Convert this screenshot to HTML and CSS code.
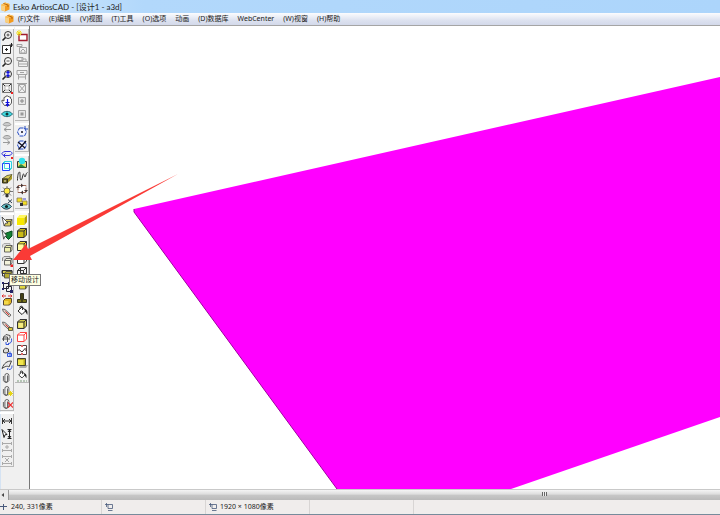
FILE: index.html
```html
<!DOCTYPE html>
<html lang="zh-CN">
<head>
  <meta charset="UTF-8" />
  <meta name="viewport" content="width=device-width, initial-scale=1" />
  <title>Esko ArtiosCAD - [设计1 - a3d]</title>
  <link rel="stylesheet" href="styles.css">
</head>
<body>
  <!-- shared symbols -->
  <svg class="sprite" aria-hidden="true">
    <symbol id="app" viewBox="0 0 10 10">
      <path d="M1 3 5 .5 9.500 2v5.500L5 9.500 1 8z" fill="#f39a1e"/>
      <path d="M1 3 5 4v5.500L1 8z" fill="#f7cf82"/>
      <path d="M1 3 5 .5 9.500 2 5 4z" fill="#ffc45c"/>
      <path d="M3.500 1.500 8 3v2" fill="none" stroke="#b9680c"/>
    </symbol>
    <symbol id="lens" viewBox="0 0 12 12">
      <circle cx="7" cy="5" r="3.500" fill="#f6f6f6" stroke="#333"/>
      <path d="M4.500 7.500 1.500 10.500" stroke="#222" stroke-width="1.600"/>
    </symbol>
    <symbol id="cube" viewBox="0 0 12 12">
      <path d="M1.500 4 4 1.500h6.500V8L8 10.500H1.500z" fill="currentColor"/>
      <path d="M1.500 4 4 1.500h6.500V8L8 10.500H1.500zM1.500 4H8v6.500M8 4l2.500-2.500" fill="none" stroke="#333"/>
    </symbol>
    <symbol id="wire" viewBox="0 0 12 12">
      <path d="M1.500 4.500h6v6h-6zM4.500 1.500h6v6h-6zM1.500 4.500l3-3M7.500 4.500l3-3M7.500 10.500l3-3M1.500 10.500l3-3" fill="none" stroke="currentColor"/>
    </symbol>
    <symbol id="minibox" viewBox="0 0 12 12">
      <path d="M3.500 5.500 5 3.500h6V8l-1.500 2h-6z" fill="currentColor"/>
      <path d="M3.500 5.500 5 3.500h6V8l-1.500 2h-6zM3.500 5.500h6V10M9.500 5.500l1.500-2" fill="none" stroke="#444" stroke-width=".8"/>
    </symbol>
    <symbol id="clip" viewBox="0 0 12 12">
      <path d="M6.500 3.500v5.500a1.300 1.300 0 0 1-2.600 0V3.500a2 2 0 0 1 4 0V8.500a3 3 0 0 1-5.500 0V4" fill="none" stroke="#444" stroke-width=".8"/>
    </symbol>
    <symbol id="pencil" viewBox="0 0 12 12">
      <path d="M1.500 2 4 2.500l6 5.500-1.800 2-6-5.500z" fill="#d8ccc4" stroke="#555" stroke-width=".8"/>
      <path d="m4.500 4.500 3.500 3.500" stroke="#d33"/>
    </symbol>
    <symbol id="bucket" viewBox="0 0 12 12">
      <path d="M2 6 6 2l4 3.500-4 4z" fill="#fff" stroke="#222"/>
      <path d="M4 4V2.500a1.300 1.300 0 0 1 2.600 0V5" fill="none" stroke="#222"/>
      <path d="M8.500 4c2.500.5 3.500 2 2.800 6-1-1.500-1-2.500-2.300-3.500z" fill="#222"/>
    </symbol>
    <symbol id="screen" viewBox="0 0 8 8">
      <path d="M1.500 0v4M0 1.500h3M3 1.500h4.500v4H3zM3 7.500h4.500" fill="none" stroke="#4a5a7c" stroke-width=".8"/>
    </symbol>
  </svg>

  <header class="titlebar">
    <svg class="logo"><use href="#app"/></svg>
    <h1>Esko ArtiosCAD - [设计1 - a3d]</h1>
  </header>

  <nav class="menubar" aria-label="菜单">
    <svg class="logo"><use href="#app"/></svg>
    <button type="button">(F)文件</button>
    <button type="button">(E)编辑</button>
    <button type="button">(V)视图</button>
    <button type="button">(T)工具</button>
    <button type="button">(O)选项</button>
    <button type="button">动画</button>
    <button type="button">(D)数据库</button>
    <button type="button">WebCenter</button>
    <button type="button">(W)视窗</button>
    <button type="button">(H)帮助</button>
  </nav>

  <main class="workspace">
    <div class="palette palette-view">
      <!-- view -->
      <div class="group">
        <button type="button" aria-label="放大"><svg viewBox="0 0 12 12"><use href="#lens"/><path d="M5.500 5h3M7 3.500v3" stroke="#333" stroke-width=".8"/></svg></button>
        <button type="button" aria-label="适合窗口"><svg viewBox="0 0 12 12"><path d="M1.500 2.500h8v8h-8z" fill="#fff" stroke="#333"/><path d="M4 6.500h3M5.500 5v3M10.500 0v4M8.500 2h3.500" stroke="#222"/></svg></button>
        <button type="button" aria-label="缩小"><svg viewBox="0 0 12 12"><use href="#lens"/><path d="M5.500 5h3" stroke="#333" stroke-width=".8"/></svg></button>
        <button type="button" aria-label="动态缩放"><svg viewBox="0 0 12 12"><use href="#lens"/><path d="M7 2v6M5.500 4 7 2.300 8.500 4M5.500 6 7 7.700 8.500 6" fill="none" stroke="#11d" stroke-width="1.200"/></svg></button>
        <button type="button" aria-label="全部显示"><svg viewBox="0 0 12 12"><path d="M1.500 1.500h9v9h-9z" fill="#eee" stroke="#555" stroke-width=".8"/><path d="m2 2 8 8M10 2 2 10" stroke="#333"/><path d="M4 4h4v4H4z" fill="#fff" stroke="#888" stroke-width=".6"/><path d="M10 10h2v2h-2z" fill="#e22"/></svg></button>
        <button type="button" aria-label="平移"><svg viewBox="0 0 12 12"><path d="M3.500 10.500 1 7V5l2 1V2.500l1.500-.5.500-1h2l1 1h1.500v1.500l1 .5v4l-2 2.500z" fill="#fff" stroke="#333" stroke-width=".8"/><path d="M6.500 4v6.500M4.500 7.500h4M5 9l1.500 2L8 9" fill="none" stroke="#11d" stroke-width="1.200"/></svg></button>
        <button type="button" aria-label="视角"><svg viewBox="0 0 12 12"><path d="M.5 6C3 2.500 9 2.500 11.500 6 9 9.500 3 9.500.5 6z" fill="#3fd9df" stroke="#256a78"/><circle cx="6" cy="6" r="1.500" fill="#133"/></svg></button>
        <button type="button" disabled aria-label="上一视图"><svg viewBox="0 0 12 12"><path d="M2 3.500C4 .8 8 .8 10 3.500 8 5.500 4 5.500 2 3.500zM10 8.500H3M5.500 6.500 3 8.500l2.500 2" fill="#ccc" stroke="#999"/></svg></button>
        <button type="button" disabled aria-label="下一视图"><svg viewBox="0 0 12 12"><path d="M2 3.500C4 .8 8 .8 10 3.500 8 5.500 4 5.500 2 3.500zM2 8.500h7M6.500 6.500 9 8.500l-2.500 2" fill="#ccc" stroke="#999"/></svg></button>
        <button type="button" aria-label="旋转视图"><svg viewBox="0 0 12 12"><path d="M3 8.500C0 7.500 0 5.500 4 4.500h5.500c2.500 1.500 2 3-1.500 4H3m1.500-2L2.500 8.500l2 2" fill="none" stroke="#33d"/><path d="M10 10h2v2h-2z" fill="#e22"/></svg></button>
        <button type="button" aria-label="视图面"><svg viewBox="0 0 12 12"><path d="m1.500 3.500 2-2h7v7l-2 2" fill="#dff" stroke="#2ad0e0"/><path d="M1.500 3.500h7v7h-7z" fill="#eff" stroke="#24f"/><path d="M3.500 1.500v7h7" fill="none" stroke="#2cc" stroke-width=".8"/></svg></button>
        <button type="button" aria-label="透视"><svg viewBox="0 0 12 12"><path d="m1 6 5-3.500 5-1V6L7 9.500 1 10z" fill="#a79a22"/><path d="m1 6 5-3.500 5-1L7.500 6z" fill="#d8cc59" stroke="#443" stroke-width=".7"/><path d="M1.500 6h5v4h-5z" fill="#6c6216" stroke="#332"/><path d="M3 7.500h2v1H3z" fill="#eed"/></svg></button>
        <button type="button" aria-label="光源"><svg viewBox="0 0 12 12"><path d="M6 0v12M0 5.500h12M2 1.500l8 8M10 1.500l-8 8" stroke="#444" stroke-width=".7"/><circle cx="6" cy="5" r="3" fill="#ffea43" stroke="#554" stroke-width=".8"/><path d="M4.500 8h3v3h-3z" fill="#333"/></svg></button>
        <button type="button" aria-label="隐藏"><svg viewBox="0 0 12 12"><path d="M.5 7.500c3-3.500 7-3.500 10 0-3 3.500-7 3.500-10 0z" fill="#67cbd1" stroke="#234"/><circle cx="5.500" cy="7.500" r="1.600" fill="#122"/><path d="m7 .5 4 3.500M11 .5 7 4" stroke="#345"/></svg></button>
      </div>
      <!-- design editing -->
      <div class="group">
        <button type="button" aria-label="选择设计"><svg viewBox="0 0 12 12"><use href="#minibox" color="#d8cc5c"/><path d="m1 1 6 6-2.500.2L3.200 10z" fill="#fff" stroke="#333" stroke-width=".8"/></svg></button>
        <button type="button" aria-label="选择面"><svg viewBox="0 0 12 12"><path d="M4 4.500 11 2v5L7.500 10.500 4 7z" fill="#118033" stroke="#064d1c"/><path d="m1 1 5 6-2 .2-1.300 3z" fill="#fff" stroke="#333" stroke-width=".8"/></svg></button>
        <button type="button" aria-label="复制设计"><svg viewBox="0 0 12 12"><path d="M1.500 5.500V3l1.500-1.500h6V3" fill="#ddd" stroke="#aaa"/><use href="#minibox" color="#eef0b0"/></svg></button>
        <button type="button" aria-label="移动设计"><svg viewBox="0 0 12 12"><path d="M1.500 6V3l1.500-1.500h6V3" fill="#ddd" stroke="#888"/><use href="#minibox" color="#f2f2dc"/><path d="M9.500 9.500H12V12H9.500z" fill="#e22"/></svg></button>
        <button type="button" aria-label="旋转设计"><svg viewBox="0 0 12 12"><path d="M1 2.500h10v3H1z" fill="#d6cd4f" stroke="#333"/><use href="#minibox" color="#b5ab30"/><path d="M1.500 3v5h2" fill="none" stroke="#333"/></svg></button>
        <button type="button" aria-label="对齐"><svg viewBox="0 0 12 12"><path d="M2.500 2.500h5v5h-5zM5.500 5.500h5v5h-5z" fill="none" stroke="#223"/><path d="M1 1h2v2H1zM7 1h2v2H7zM1 7h2v2H1zM9 9h3v3H9z" fill="#226"/></svg></button>
        <button type="button" aria-label="翻转"><svg viewBox="0 0 12 12"><path d="m2.500 6.500 2-2h6v4l-2 2.500h-6z" fill="#dfb521" stroke="#543"/><path d="M3 7h4.500v3.500H3z" fill="#f3d94a"/><path d="M1 2h4M7 2h4M2.500.5 1 2l1.500 1.500M9.500.5 11 2 9.500 3.500" fill="none" stroke="#d33"/></svg></button>
        <button type="button" aria-label="折叠"><svg viewBox="0 0 12 12"><use href="#pencil"/></svg></button>
        <button type="button" aria-label="折叠全部"><svg viewBox="0 0 12 12"><use href="#pencil"/><path d="M7.500 7.500h4v3h-4z" fill="#d8c63a" stroke="#443" stroke-width=".8"/></svg></button>
        <button type="button" aria-label="拉伸"><svg viewBox="0 0 12 12"><path d="M2.500 8V4L5 1.500l4 1V5M2.500 4h4v5M1 6h8" fill="none" stroke="#444" stroke-width=".9"/><path d="M7 10.500c3 0 4-1.500 3.500-5M5 9v2.500h3" fill="none" stroke="#35d"/></svg></button>
        <button type="button" aria-label="车削"><svg viewBox="0 0 12 12"><path d="M2.500 6.500V4L4.500 2l3 1v3L5 7z" fill="#ddd" stroke="#444"/><path d="M6.500 7.500h4v3h-4zM9 5.500v5" fill="#cdf" stroke="#35d"/></svg></button>
        <button type="button" aria-label="弯曲"><svg viewBox="0 0 12 12"><path d="M1 9.500C3 4 6 2 10.500 2L8 8c-2-1.500-4-.500-7 1.500z" fill="#e8e8e8" stroke="#444"/><path d="M8 10.500c2 0 3-1 3-4M7 9l-.5 2" fill="none" stroke="#35d"/></svg></button>
        <button type="button" aria-label="附件"><svg viewBox="0 0 12 12"><use href="#clip"/></svg></button>
        <button type="button" aria-label="新附件"><svg viewBox="0 0 12 12"><use href="#clip"/><path d="M9.500 6v5M7 8.500h5M7.500 6.500l4 4M11.500 6.500l-4 4" stroke="#e6d413"/></svg></button>
        <button type="button" aria-label="删除附件"><svg viewBox="0 0 12 12"><use href="#clip"/><path d="m7 4.500 5 5M12 4.500l-5 5" stroke="#e33" stroke-width="1.200"/></svg></button>
      </div>
      <!-- dimensions -->
      <div class="group">
        <button type="button" aria-label="尺寸"><svg viewBox="0 0 12 12"><path d="M1.500 3v6M10.500 3v6M2 6h8M4 4 2 6l2 2M8 4l2 2-2 2" fill="none" stroke="#333"/></svg></button>
        <button type="button" aria-label="移动尺寸"><svg viewBox="0 0 12 12"><path d="m1 1.500 5 5-2 .3L3 9.500z" fill="#fff" stroke="#222"/><path d="M8.500 2v8M6.500 1.500h4M6.500 10.500h4M7 4l1.500-2L10 4M7 8l1.500 2L10 8" fill="none" stroke="#222"/></svg></button>
        <button type="button" disabled aria-label="水平间距"><svg viewBox="0 0 12 12"><path d="M1.500 1v3M10.500 1v3M1.500 8v3M10.500 8v3M2 2.500h8M2 9.500h8M6 4v4M4 6h4" fill="none" stroke="#aaa"/></svg></button>
        <button type="button" disabled aria-label="垂直间距"><svg viewBox="0 0 12 12"><path d="M1.500 1v3M10.500 1v3M1.500 8v3M10.500 8v3M2 2.500h8M2 9.500h8M4 4l4 4M8 4 4 8" fill="none" stroke="#aaa"/></svg></button>
      </div>
    </div>

    <div class="palette palette-model">
      <!-- designs -->
      <div class="group">
        <button type="button" aria-label="新建设计"><svg viewBox="0 0 12 12"><path d="M3 4.500h8v6H3z" fill="#fff" stroke="#a11c2e" stroke-width="1.400"/><path d="M3 0v6M0 3h6M1 1l4 4M5 1 1 5" stroke="#f0df1c"/></svg></button>
        <button type="button" disabled aria-label="打开设计"><svg viewBox="0 0 12 12"><path d="M1 1.500h5v2H1zM3.500 4.500h7v6h-7zM5 8l2-2 2 2v2H5z" fill="none" stroke="#a3a3a3"/></svg></button>
        <button type="button" disabled aria-label="添加设计"><svg viewBox="0 0 12 12"><path d="M1 1.500h6v3H1zM2.500 5.500h9v5h-9zM3 8h8M5 3h5v2" fill="none" stroke="#a3a3a3"/></svg></button>
        <button type="button" disabled aria-label="板材"><svg viewBox="0 0 12 12"><path d="M1 1.500h10v4H1zM2.500 5.500v5M9.500 5.500v5M3 8h6M4 3.500h4" fill="none" stroke="#a3a3a3"/></svg></button>
        <button type="button" disabled aria-label="展开"><svg viewBox="0 0 12 12"><path d="M2.500 2.500h7v8h-7zM1 1.500h10M3 3l6 7M9 3l-6 7" fill="none" stroke="#a3a3a3"/></svg></button>
        <button type="button" disabled aria-label="装入"><svg viewBox="0 0 12 12"><path d="M2.500 2.500h7v7h-7z" fill="#e6e6e6" stroke="#a3a3a3"/><path d="M4 6h4M6 4v4" stroke="#888"/></svg></button>
        <button type="button" disabled aria-label="移出"><svg viewBox="0 0 12 12"><path d="M2.500 2.500h7v7h-7z" fill="#e6e6e6" stroke="#a3a3a3"/><path d="M4.500 4.500h3v3h-3z" fill="#999"/></svg></button>
      </div>
      <!-- rotation -->
      <div class="group">
        <button type="button" aria-label="旋转"><svg viewBox="0 0 12 12"><path d="M3.500 2h5l2 4-2 4h-5l-2-4z" fill="#f2f4ff" stroke="#234ac0" stroke-dasharray="4 1"/><circle cx="6" cy="6" r="1" fill="#112"/><path d="M9 0v3h3" fill="none" stroke="#234ac0"/></svg></button>
        <button type="button" aria-label="取消旋转"><svg viewBox="0 0 12 12"><path d="M3.500 2h5l2 4-2 4h-5l-2-4z" fill="#f2f4ff" stroke="#234ac0" stroke-dasharray="4 1"/><path d="m2 3 7 6M10 2 2.500 10.500" fill="none" stroke="#112" stroke-width="1.300"/></svg></button>
      </div>
      <!-- output -->
      <div class="group">
        <button type="button" aria-label="位图"><svg viewBox="0 0 12 12"><path d="M1.500 4.500h9v6h-9z" fill="#e8dd70" stroke="#333"/><path d="m1.500 10 3.500-3 5 3.500" fill="#2b8a3c"/><circle cx="6" cy="4" r="3.200" fill="#2ee0ea"/></svg></button>
        <button type="button" aria-label="路径"><svg viewBox="0 0 12 12"><path d="M1.500 10.500C1.500 5 2.500 2 3.500 2s0 8 1.500 8 1.500-6 2.500-6 .5 3 1.500 3 .5-4 2.500-4.500" fill="none" stroke="#333"/></svg></button>
        <button type="button" aria-label="循环"><svg viewBox="0 0 12 12"><path d="M2 2.500h8v7H2z" fill="#fff" stroke="#965" stroke-dasharray="4 1"/><path d="M0 5h4L2 2.500zM8 7h4l-2 2.500zM5 .5v4l2.500-2zM7 7.500v4l-2.500-2z" fill="#433"/></svg></button>
        <button type="button" aria-label="动画关键帧"><svg viewBox="0 0 12 12"><path d="M1 2h5v4H1zM6.500 5h4.500v4H6.500z" fill="#f2df22" stroke="#875" stroke-width=".8"/><path d="M4 7h3v3H4z" fill="#333"/><path d="M7 3h3" stroke="#44c"/></svg></button>
      </div>
      <!-- display style -->
      <div class="group">
        <button type="button" class="pressed" aria-label="实体"><svg viewBox="0 0 12 12"><path d="M1 4h7.500v7H1z" fill="#f7e800"/><path d="m1 4 2.500-3H11L8.500 4z" fill="#fff75e"/><path d="M8.500 4 11 1v7l-2.500 3z" fill="#b5a400"/></svg></button>
        <button type="button" aria-label="实体加边"><svg viewBox="0 0 12 12"><use href="#cube" color="#cabb16"/></svg></button>
        <button type="button" aria-label="半透明"><svg viewBox="0 0 12 12"><use href="#cube" color="#efe43b"/><path d="M2 4.500h5.500V10H2z" fill="#fffba0"/></svg></button>
        <button type="button" aria-label="隐藏线"><svg viewBox="0 0 12 12"><use href="#cube" color="#fff"/></svg></button>
        <button type="button" aria-label="线框"><svg viewBox="0 0 12 12"><use href="#wire" color="#333"/></svg></button>
        <button type="button" aria-label="透明"><svg viewBox="0 0 12 12"><use href="#minibox" color="#e2d740"/></svg></button>
        <button type="button" aria-label="厚度"><svg viewBox="0 0 12 12"><path d="M4.500 1.500h3v6h3v3h-9v-3h3z" fill="#77701a" stroke="#332"/><path d="M6 2v8" stroke="#111"/></svg></button>
        <button type="button" aria-label="填色"><svg viewBox="0 0 12 12"><use href="#bucket"/></svg></button>
        <button type="button" aria-label="面颜色"><svg viewBox="0 0 12 12"><use href="#cube" color="#d6cc4a"/><path d="M2.500 5H7v4.500H2.500z" fill="#f5ec80"/></svg></button>
        <button type="button" aria-label="边颜色"><svg viewBox="0 0 12 12"><path d="M1.500 4 4 1.500h6.500V8L8 10.500H1.500zM1.500 4H8v6.500M8 4l2.500-2.500" fill="#fff" stroke="#f44"/></svg></button>
        <button type="button" aria-label="捕捉"><svg viewBox="0 0 12 12"><path d="M1.500 1.500h9v9h-9z" fill="#fff" stroke="#544"/><path d="m3 5.500 3 2.500 3.500-4M1 6h2M9 6h2M6 9v2" fill="none" stroke="#322"/><path d="M5 1h2v2H5zM5 9h2v2H5z" fill="#d66"/></svg></button>
        <button type="button" aria-label="阴影"><svg viewBox="0 0 12 12"><path d="M4 8h8l-2 3H3z" fill="#aaa"/><path d="M1.500 1.500h8v7h-8z" fill="#b8a91f" stroke="#443"/><path d="M2 3h5.500v5H2z" fill="#f0e54d"/></svg></button>
        <button type="button" aria-label="背景颜色"><svg viewBox="0 0 12 12"><use href="#bucket" height="10"/><path d="M1 11h10" stroke="#7a9a7a" stroke-dasharray="2 1"/></svg></button>
      </div>
    </div>

    <div class="viewport">
      <svg class="model" viewBox="0 0 690 463" preserveAspectRatio="xMinYMin slice" role="img" aria-label="3D 模型">
        <path d="M104 183 690 51v340L481 463H307L104 186z" fill="#f0f"/>
        <path d="M104 183v3l203 277" fill="none" stroke="#a000a0"/>
      </svg>
    </div>

    <svg class="pointer-arrow" viewBox="0 0 168 90" aria-hidden="true">
      <path d="M1 86 14 70l2 5L166 0 18 82l2 4z" fill="#fa3a36"/>
    </svg>
    <div class="tooltip" role="tooltip">移动设计</div>
  </main>

  <div class="scrollbar">
    <button type="button" aria-label="向左滚动"><svg viewBox="0 0 8 10"><path d="M4 3v4L1.500 5z" fill="#444"/></svg></button>
    <div class="thumb"><span class="grip"></span></div>
  </div>

  <footer class="statusbar">
    <span class="cell cell-first"><svg viewBox="0 0 8 8"><path d="M3.500 1v6M0 3.500h7" stroke="#4a5a7c"/></svg>240, 331像素</span>
    <span class="cell"><svg><use href="#screen"/></svg></span>
    <span class="cell"><svg><use href="#screen"/></svg>1920 × 1080像素</span>
    <span class="cell"></span>
    <span class="cell cell-rest"></span>
  </footer>
</body>
</html>
```

FILE: styles.css
```css
* {
  box-sizing: border-box;
}
body {
  display: flex;
  flex-direction: column;
  height: 100vh;
  margin: 0;
  overflow: hidden;
  background: #f0f0f0;
  border-bottom: 1px solid #768b9b;
  color: #222;
  font-family: "Noto Sans", "Noto Sans CJK SC", sans-serif;
  font-size: 7px;
  line-height: 12px;
}
button {
  margin: 0;
  padding: 0;
  border: 0;
  background: none;
  color: inherit;
  font: inherit;
}
svg {
  display: block;
}
.sprite {
  position: absolute;
  width: 0;
  height: 0;
}
.logo {
  width: 10px;
  height: 10px;
}

/* title and menu */
.titlebar {
  display: flex;
  align-items: center;
  gap: 3px;
  height: 13px;
  background: linear-gradient(90deg, #d3e8fb, #b2d8fb 20%, #acd5fb);
}
.titlebar h1 {
  margin: 0;
  font-family: Lato, "Noto Sans CJK SC", sans-serif;
  font-size: 8px;
  font-weight: normal;
}
.menubar {
  display: flex;
  align-items: center;
  gap: 9px;
  height: 12px;
  padding-left: 4px;
  background: linear-gradient(#fbfcfe, #dde2f0 60%, #d3d9ea);
}
.menubar .logo {
  margin-right: -5px;
}

/* palettes */
.workspace {
  position: relative;
  flex: 1;
  display: flex;
  min-height: 0;
  border-top: 1px solid #a5a5a5;
}
.palette {
  display: flex;
  flex-direction: column;
  align-items: flex-start;
  gap: 4px;
  width: 15px;
  padding-top: 3px;
}
.palette-view {
  box-shadow: inset 1px 0 #d5e3f3;
}
.palette-model {
  gap: 5px;
  width: 14px;
}
.group {
  display: flex;
  flex-direction: column;
  width: 14px;
  border-right: 1px solid #b8b8b8;
  box-shadow: 0 -2px #fff, 0 1px #b8b8b8;
}
.group button {
  display: flex;
  justify-content: flex-end;
  align-items: center;
  height: 13px;
}
.group svg {
  width: 12px;
  height: 12px;
}
.group .pressed {
  background: #fafafa;
}

/* drawing area */
.viewport {
  flex: 1;
  min-width: 0;
  overflow: hidden;
  background: #fff;
  border-left: 1px solid #777;
}
.model {
  width: 100%;
  height: 100%;
}
.pointer-arrow {
  position: absolute;
  top: 148px;
  left: 12px;
  width: 168px;
  height: 90px;
}
.tooltip {
  position: absolute;
  top: 248px;
  left: 9px;
  padding: 0 1px;
  background: #ffffe1;
  border: 1px solid #777;
  line-height: 10px;
}

/* bottom bars */
.scrollbar {
  display: flex;
  height: 11px;
  background: #e9e9e9;
  border-top: 1px solid #c9c9c9;
}
.scrollbar button {
  width: 8px;
}
.scrollbar svg {
  width: 8px;
  height: 10px;
}
.thumb {
  flex: 1;
  background: linear-gradient(#f4f4f4, #dedede 40%, #c6c6c6 55%, #bababa);
  border-left: 1px solid #999;
}
.grip {
  display: block;
  width: 5px;
  height: 4px;
  margin-top: 2px;
  margin-left: 75%;
  background: repeating-linear-gradient(90deg, #666 0 1px, #eee 1px 2px);
}
.statusbar {
  display: flex;
  height: 14px;
  background: #f0edec;
}
.cell {
  display: flex;
  align-items: center;
  gap: 3px;
  width: 104px;
  padding-left: 3px;
  border-right: 1px solid #d8d5d4;
}
.cell-first {
  width: 102px;
  padding-left: 0;
}
.cell-rest {
  flex: 1;
  border-right: 0;
}
.cell svg {
  width: 8px;
  height: 8px;
}
```
